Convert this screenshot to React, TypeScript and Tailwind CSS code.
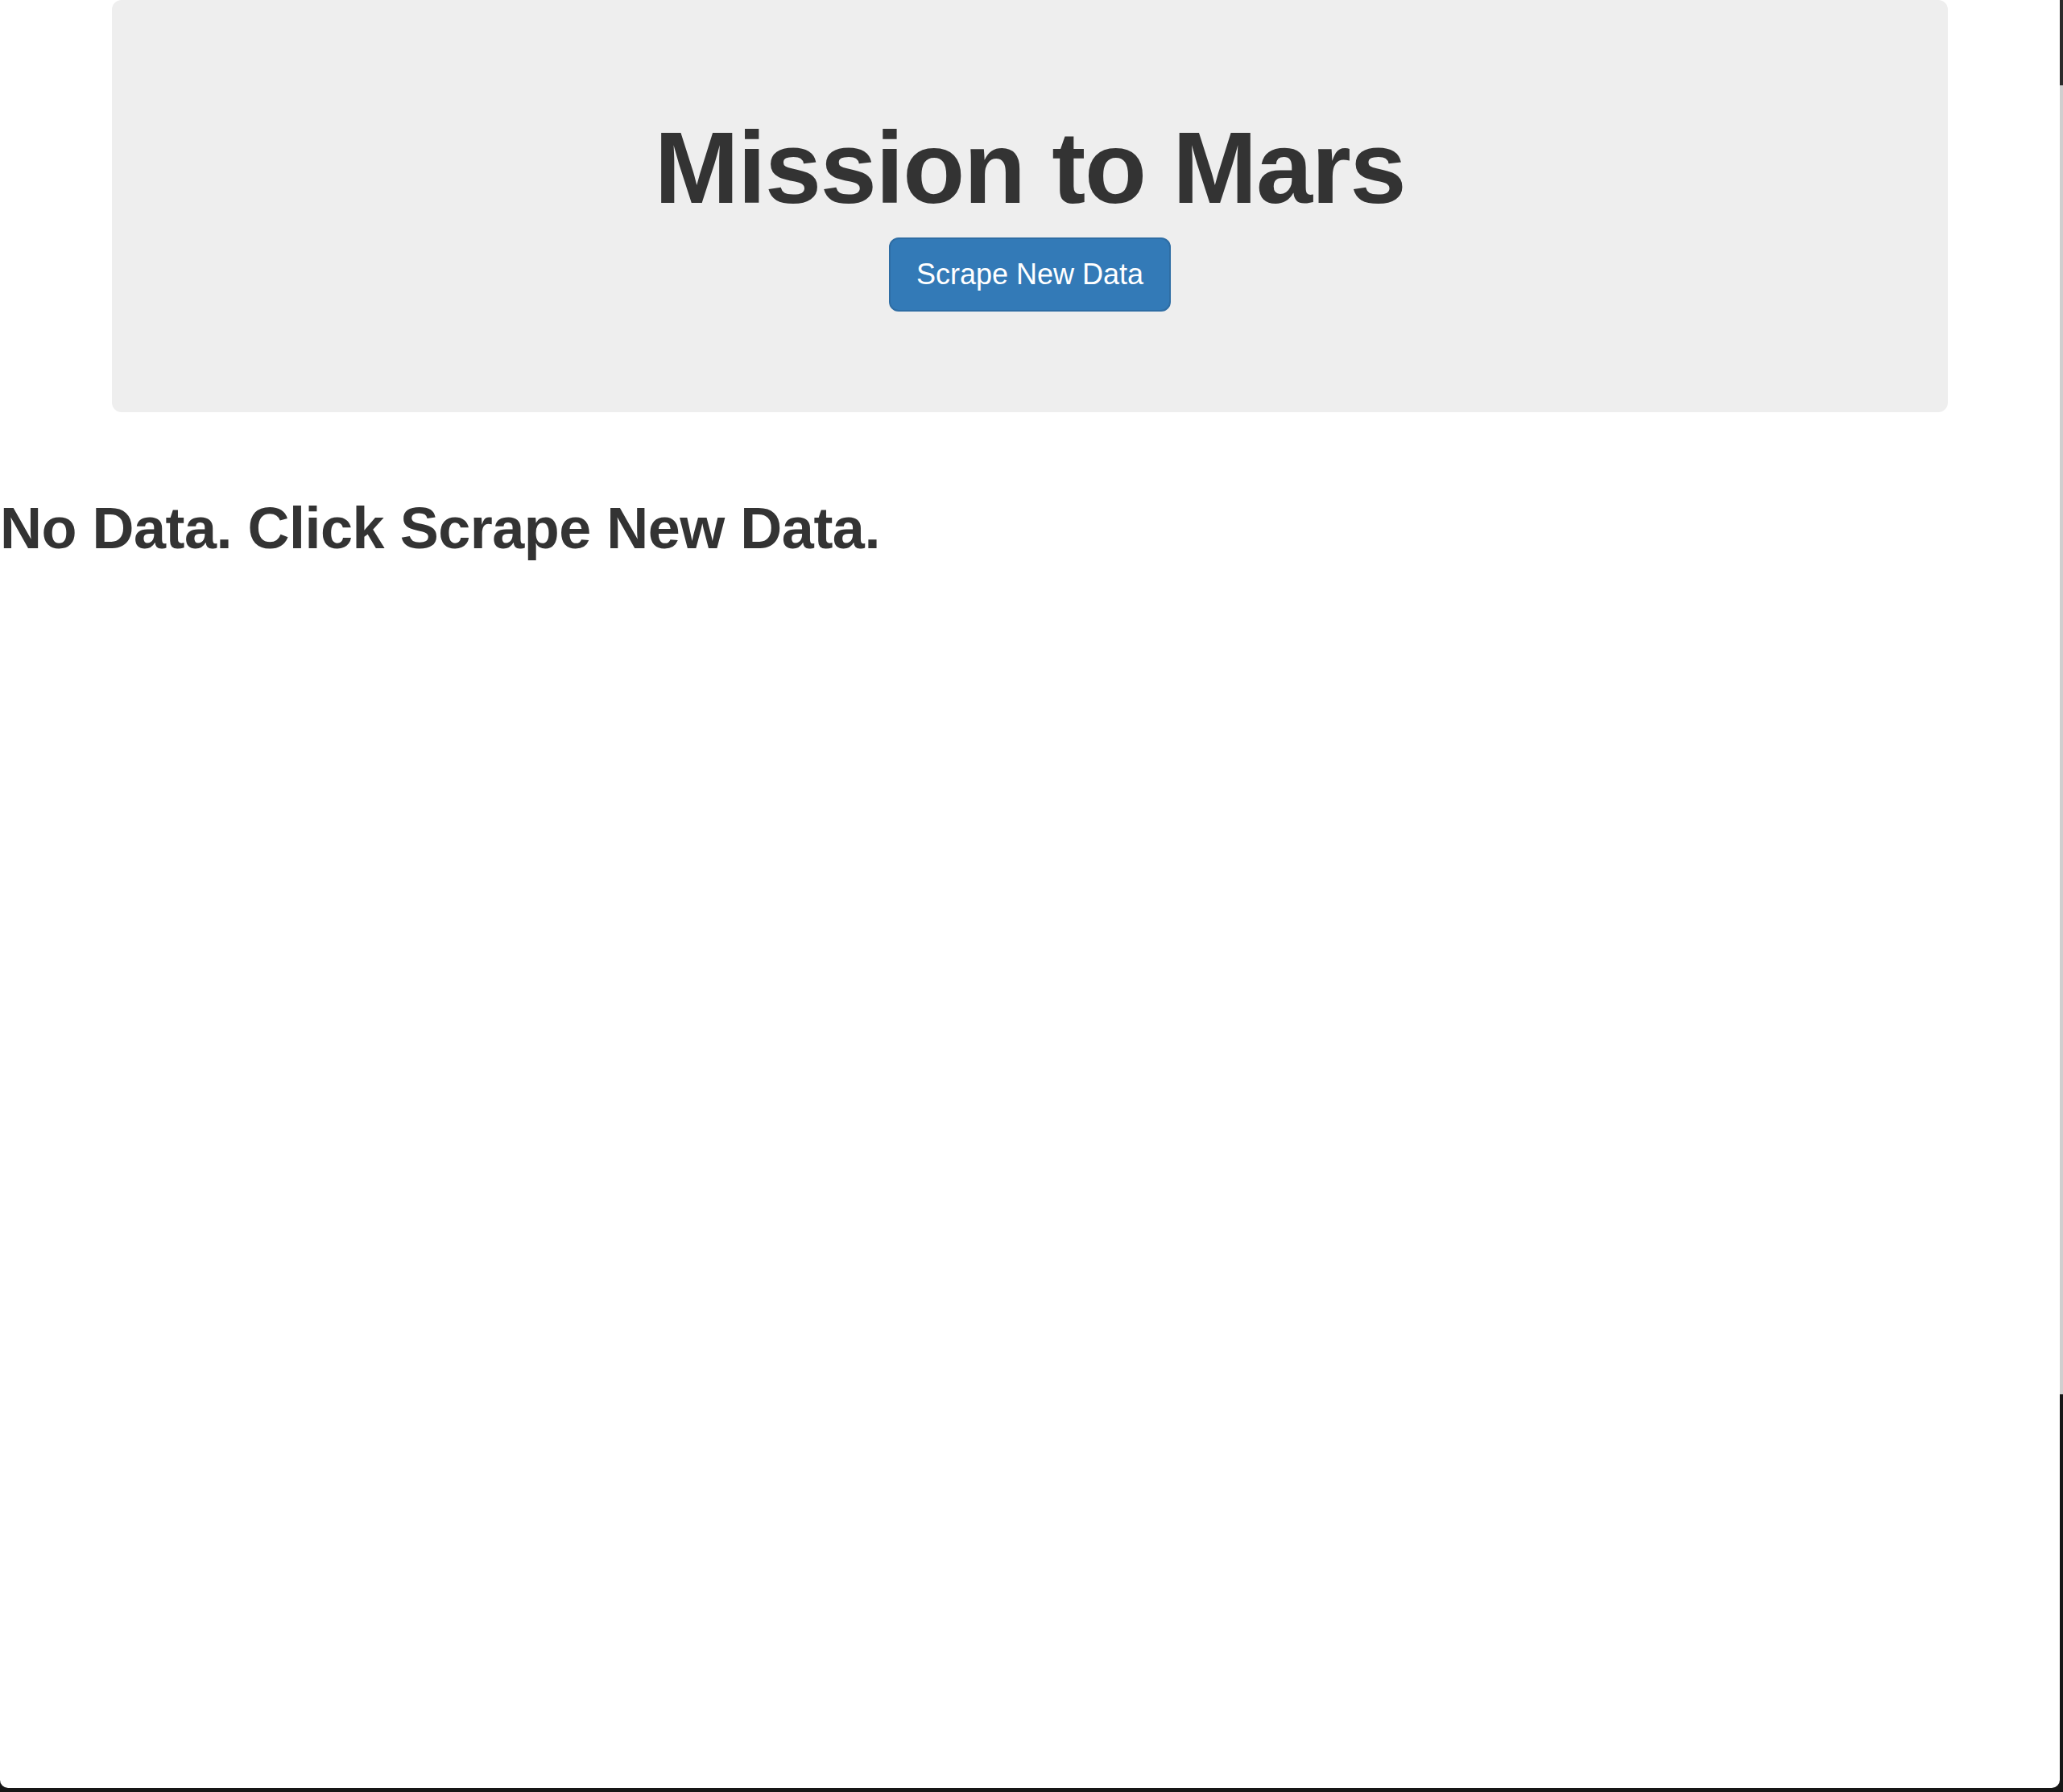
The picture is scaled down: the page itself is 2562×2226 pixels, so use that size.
import React from "react";

const font = { fontFamily: '"Liberation Sans", Arial, sans-serif' };

function Jumbotron() {
  return <div className="mx-[139px] h-[512px] flex-none rounded-[12px] bg-[#eeeeee] flex flex-col items-center pt-[146px]">
    <h1 className="text-[126px] leading-none font-bold tracking-[-1.3px] text-[#333333]">
      Mission to Mars
    </h1>
    <button className="mt-[23px] h-[92px] px-[32px] border-2 border-[#2e6da4] bg-[#337ab7] rounded-[12px] text-white text-[36px] leading-[48px]">
      Scrape New Data
    </button>
  </div>
}

export default function App() {
  return <div className="w-[2562px] h-[2226px] bg-[#161616] flex overflow-hidden" style={font}>
    <div className="w-[2558px] h-[2221px] flex-none bg-white rounded-b-[10px] flex flex-col">
      <Jumbotron />
      <h1 className="mt-[108px] text-[72px] leading-none font-bold tracking-[-0.5px] text-[#333333]">
        No Data. Click Scrape New Data.
      </h1>
    </div>
    <div className="w-[4px] flex flex-col">
      <div className="h-[106px] bg-[#2b2b2b]" />
      <div className="h-[1626px] bg-[#cfcfcf]" />
      <div className="grow bg-[#161616]" />
    </div>
  </div>
}
